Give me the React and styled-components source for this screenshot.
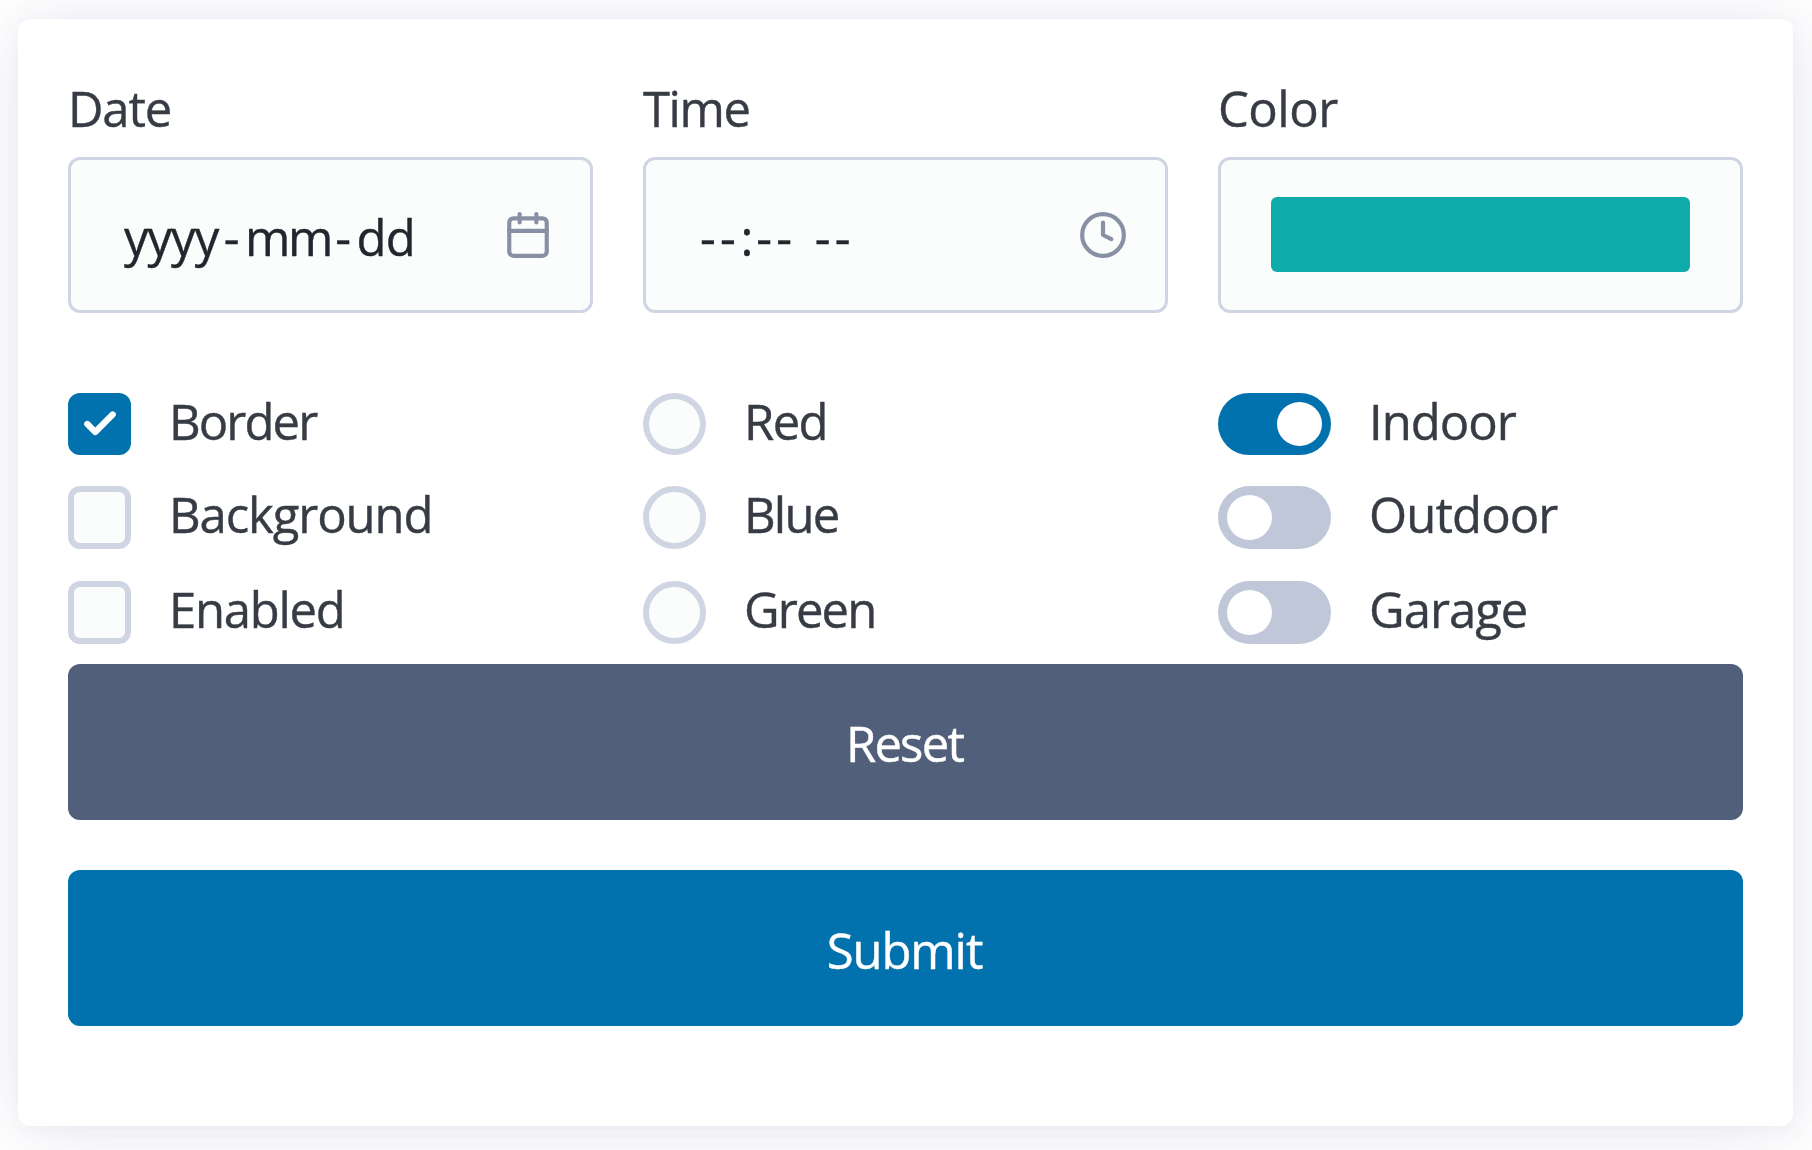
import React from 'react';
import styled, { createGlobalStyle } from 'styled-components';

const GlobalStyle = createGlobalStyle`
  *, *::before, *::after { box-sizing: border-box; }
  body {
    margin: 0;
    height: 1150px;
    overflow: hidden;
    background: #fff;
    color: #373c44;
    font: 400 49px/78px "Open Sans", "Noto Sans", sans-serif;
    -webkit-text-stroke: 0.4px currentColor;
  }
`;

const Page = styled.main`
  height: 1150px;
  padding: 19px 19px 24px 18px;
  overflow: hidden;
`;

const Card = styled.form`
  height: 1107px;
  margin: 0;
  padding: 50px;
  border-radius: 12px;
  background: #fff;
  box-shadow:
    0.7px 1.4px 8.7px rgba(129, 135, 181, 0.017),
    1.7px 3.3px 20px rgba(129, 135, 181, 0.024),
    3px 6px 37px rgba(129, 135, 181, 0.03),
    5.6px 8px 67px rgba(129, 135, 181, 0.036),
    0 2px 80px rgba(129, 132, 175, 0.14),
    0 0 0 0.7px rgba(129, 135, 181, 0.015);
`;

const Columns = styled.div`
  display: grid;
  grid-template-columns: repeat(3, 525px);
  column-gap: 50px;
`;

const Field = styled.label`
  display: flex;
  flex-direction: column;
  gap: 10px;
`;

const Text = styled.span`
  letter-spacing: ${(p) => p.$track}px;
  white-space: pre;
`;

const InputBox = styled.div`
  display: flex;
  align-items: center;
  height: 156px;
  padding: 0 37px 0 ${(p) => p.$inset || 50}px;
  border: 3px solid #cfd5e2;
  border-radius: 12px;
  background: #fbfdfc;
  color: #23262c;
`;

const Segments = styled.div`
  display: flex;
  flex: 1;
  padding-top: 4px;
`;

const Segment = styled.span`
  width: ${(p) => p.$w}px;
  margin-left: ${(p) => p.$gap || 0}px;
  letter-spacing: ${(p) => p.$track || 0}px;
  white-space: nowrap;
`;

const Icon = styled.svg`
  flex: none;
  width: 50px;
  height: 50px;
  fill: none;
  stroke: #8891a4;
  stroke-width: 2;
  stroke-linecap: round;
  stroke-linejoin: round;
`;

const Swatch = styled.div`
  width: 419px;
  height: 75px;
  margin-bottom: 1px;
  border-radius: 6px;
  background: #0faaaa;
`;

const Options = styled(Columns)`
  margin-top: 80px;
`;

const OptionList = styled.div`
  display: grid;
  grid-template-rows: 93px 95px 63px;
`;

const Option = styled.label`
  --control: 63px;
  display: flex;
  align-items: flex-start;
  gap: 38px;
  line-height: 56px;

  &:first-child { --control: 62px; }
`;

const Box = styled.span`
  display: flex;
  align-items: center;
  justify-content: center;
  flex: none;
  width: 63px;
  height: var(--control);
  border: 6px solid ${(p) => (p.$checked ? '#0172ad' : '#cfd5e2')};
  border-radius: ${(p) => (p.$round ? '50%' : '12px')};
  background: ${(p) => (p.$checked ? '#0172ad' : '#fbfdfc')};
`;

const Check = styled.svg`
  width: 38px;
  height: 38px;
  margin: 0 -1px 1px 0;
  flex: none;
  fill: none;
  stroke: #fff;
  stroke-width: 4;
  stroke-linecap: round;
  stroke-linejoin: round;
`;

const Track = styled.span`
  display: flex;
  flex: none;
  justify-content: ${(p) => (p.$on ? 'flex-end' : 'flex-start')};
  width: 113px;
  height: var(--control);
  padding: 9px;
  border-radius: 32px;
  background: ${(p) => (p.$on ? '#0172ad' : '#bfc7d9')};
`;

const Knob = styled.span`
  width: 45px;
  border-radius: 50%;
  background: #fff;
`;

const Actions = styled.div`
  display: flex;
  flex-direction: column;
  gap: 50px;
  margin-top: 20px;
`;

const Button = styled.button`
  height: 156px;
  padding: ${(p) => p.$drop}px 2px 0 0;
  border: 0;
  border-radius: 12px;
  background: ${(p) => p.$color};
  color: #fff;
  font: inherit;
`;

const checkboxes = [
  { label: 'Border', track: -1.9, checked: true },
  { label: 'Background', track: -1.1 },
  { label: 'Enabled', track: -1.25 },
];
const radios = [
  { label: 'Red', track: -1.6 },
  { label: 'Blue', track: -1.8 },
  { label: 'Green', track: -1.85 },
];
const switches = [
  { label: 'Indoor', track: -1, on: true },
  { label: 'Outdoor', track: -0.87 },
  { label: 'Garage', track: -0.97 },
];

export default function App() {
  return (
    <>
      <GlobalStyle />
      <Page>
        <Card>
          <Columns>
            <Field>
              <Text $track={-1.2}>Date</Text>
              <InputBox $inset={53}>
                <Segments>
                  <Segment $w={99.8} $track={-1}>yyyy</Segment>
                  <Segment $w={21.3}>-</Segment>
                  <Segment $w={90.2} $track={-2.4}>mm</Segment>
                  <Segment $w={21.3}>-</Segment>
                  <Segment $w={60} $track={-0.9}>dd</Segment>
                </Segments>
                <Icon viewBox="0 0 24 24">
                  <rect x="3" y="4" width="18" height="18" rx="2" />
                  <path d="M16 2v4M8 2v4M3 10h18" />
                </Icon>
              </InputBox>
            </Field>
            <Field>
              <Text $track={-1.4}>Time</Text>
              <InputBox $inset={54}>
                <Segments>
                  <Segment $w={40.5} $track={4.3}>--</Segment>
                  <Segment $w={15.7}>:</Segment>
                  <Segment $w={40.2} $track={4.3}>--</Segment>
                  <Segment $w={40.2} $gap={18.3} $track={4.3}>--</Segment>
                </Segments>
                <Icon viewBox="0 0 24 24">
                  <circle cx="12" cy="12" r="10" />
                  <path d="M12 6v6l4 2" />
                </Icon>
              </InputBox>
            </Field>
            <Field>
              <Text $track={-0.5}>Color</Text>
              <InputBox>
                <Swatch />
              </InputBox>
            </Field>
          </Columns>

          <Options>
            <OptionList>
              {checkboxes.map((o) => (
                <Option key={o.label}>
                  <Box $checked={o.checked}>
                    {o.checked && (
                      <Check viewBox="0 0 24 24">
                        <path d="M20 6 9 17l-5-5" />
                      </Check>
                    )}
                  </Box>
                  <Text $track={o.track}>{o.label}</Text>
                </Option>
              ))}
            </OptionList>
            <OptionList>
              {radios.map((o) => (
                <Option key={o.label}>
                  <Box $round />
                  <Text $track={o.track}>{o.label}</Text>
                </Option>
              ))}
            </OptionList>
            <OptionList>
              {switches.map((o) => (
                <Option key={o.label}>
                  <Track $on={o.on}>
                    <Knob />
                  </Track>
                  <Text $track={o.track}>{o.label}</Text>
                </Option>
              ))}
            </OptionList>
          </Options>

          <Actions>
            <Button type="reset" $color="#525f7a" $drop={2}>
              <Text $track={-1.8}>Reset</Text>
            </Button>
            <Button type="submit" $color="#0172ad" $drop={4}>
              <Text $track={-1.1}>Submit</Text>
            </Button>
          </Actions>
        </Card>
      </Page>
    </>
  );
}
